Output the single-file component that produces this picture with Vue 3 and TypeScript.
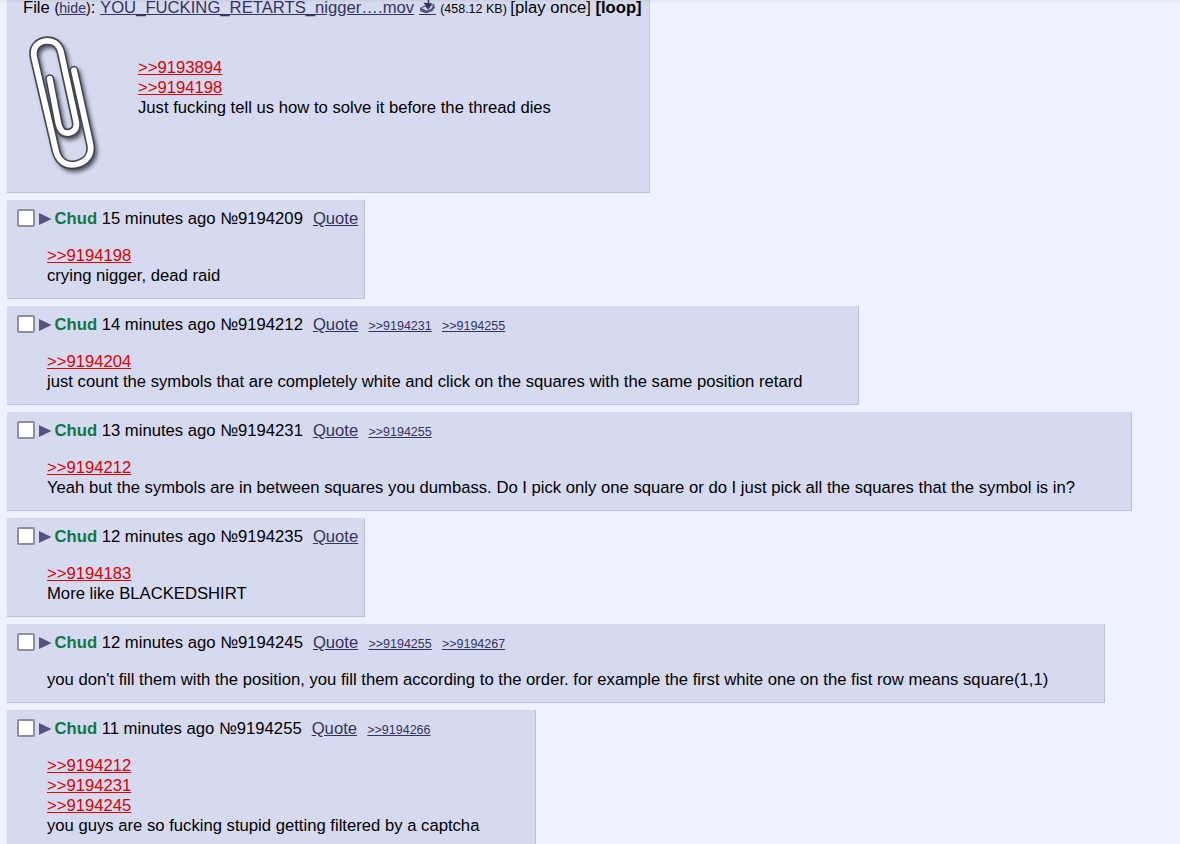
<script setup lang="ts">
interface Post {
  no: string
  ago: string
  width: number
  backlinks: string[]
  cites: string[]
  text: string
}

const posts: Post[] = [
  { no: '9194209', ago: '15 minutes ago', width: 358, backlinks: [], cites: ['9194198'], text: 'crying nigger, dead raid' },
  { no: '9194212', ago: '14 minutes ago', width: 852, backlinks: ['9194231', '9194255'], cites: ['9194204'], text: 'just count the symbols that are completely white and click on the squares with the same position retard' },
  { no: '9194231', ago: '13 minutes ago', width: 1125, backlinks: ['9194255'], cites: ['9194212'], text: 'Yeah but the symbols are in between squares you dumbass. Do I pick only one square or do I just pick all the squares that the symbol is in?' },
  { no: '9194235', ago: '12 minutes ago', width: 358, backlinks: [], cites: ['9194183'], text: 'More like BLACKEDSHIRT' },
  { no: '9194245', ago: '12 minutes ago', width: 1098, backlinks: ['9194255', '9194267'], cites: [], text: "you don't fill them with the position, you fill them according to the order. for example the first white one on the fist row means square(1,1)" },
  { no: '9194255', ago: '11 minutes ago', width: 529, backlinks: ['9194266'], cites: ['9194212', '9194231', '9194245'], text: 'you guys are so fucking stupid getting filtered by a captcha' },
]

const fileCites = ['9193894', '9194198']
const clip = 'M74 69.300L90.300 143C92.500 154 86 161 77 163.300C66 166 58.500 160 56 150L34.3 57C32 48 36.500 41.500 45 40C53 38.800 59 43 61 51L76 120C77.500 127 74.500 131 69 132C63 132.800 59.800 129 58.500 123L49.700 77.700'
</script>

<template>
  <div class="thread">
    <div class="post file-post">
      <div class="fileinfo">
        <span>File <small>(<a href="#">hide</a>)</small>: </span>
        <a class="filename" href="#">YOU_FUCKING_RETARTS_nigger….mov</a>
        <a class="download" href="#">
          <svg width="17" height="14" viewBox="0 0 17 14">
            <path d="M1 8L4.500 6L15 4L16 7.500L13.500 11L7 13.500L1 11Z" fill="#54567f" />
            <path d="M2.500 8L7 6.500L7.500 8L9 9.500L11.500 7L12 5.500L14 5.500L12.500 8.500L7.500 10.500Z" fill="#d6daf0" />
            <path d="M9.500 0V6M6 3.500L8.800 8L12 4Z" fill="#34345c" stroke="#34345c" stroke-width="1.5" />
          </svg>
        </a>
        <small class="size">(458.12 KB)</small>
        <span class="play">[play once]</span>
        <b>[loop]</b>
      </div>
      <div class="file-row">
        <svg class="clip" width="100" height="150" viewBox="20 30 100 150">
          <path class="shade" :d="clip" />
          <path class="edge" :d="clip" />
          <path class="wire" :d="clip" />
        </svg>
        <div class="file-body">
          <div v-for="c in fileCites" :key="c"><a class="cite" href="#">&gt;&gt;{{ c }}</a></div>
          <div>Just fucking tell us how to solve it before the thread dies</div>
        </div>
      </div>
    </div>

    <div v-for="p in posts" :key="p.no" class="post" :style="{ width: p.width + 'px' }">
      <div class="intro">
        <span class="box"></span>
        <svg class="arrow" width="13" height="12" viewBox="0 0 13 12"><path d="M0 0L12.500 6L0 12Z" /></svg>
        <span class="name">Chud</span>
        <span class="time">{{ p.ago }} №{{ p.no }}</span>
        <a class="quote" href="#">Quote</a>
        <a v-for="b in p.backlinks" :key="b" class="backlink" href="#">&gt;&gt;{{ b }}</a>
      </div>
      <div class="body">
        <div v-for="c in p.cites" :key="c"><a class="cite" href="#">&gt;&gt;{{ c }}</a></div>
        <div>{{ p.text }}</div>
      </div>
    </div>
  </div>
</template>

<style>
body {
  margin: 0;
  background: #eef2ff;
}
</style>

<style scoped>
.thread {
  height: 844px;
  overflow: hidden;
  box-sizing: border-box;
  padding-left: 7px;
  display: flex;
  flex-direction: column;
  align-items: flex-start;
  gap: 7px;
  background: linear-gradient(#e2e6f3, #eef2ff 3px);
  color: #000;
  font-family: "Liberation Sans", Arial, sans-serif;
  font-size: 16.67px;
  line-height: 20px;
  white-space: nowrap;
}
.post {
  box-sizing: border-box;
  flex-shrink: 0;
  padding: 9px 0 12px;
  background: #d6daf0;
  border-right: 1px solid #b7c5d9;
  border-bottom: 1px solid #b7c5d9;
}
a {
  color: #34345c;
}
.file-post {
  width: 643px;
  height: 193px;
  padding: 0;
  background: linear-gradient(#cbcfe2, #d6daf0 3px);
}
/* 16px line: the row sits flush with the top of the page */
.fileinfo {
  display: flex;
  align-items: baseline;
  height: 17px;
  line-height: 16px;
  padding-left: 16px;
  white-space: pre;
}
.fileinfo small {
  font-size: 14.2px;
}
.fileinfo .size {
  margin-right: 3.5px;
  font-size: 12.5px;
}
.play {
  margin-right: 4.5px;
}
.download {
  width: 17px;
  height: 14px;
  margin: 0 4px 0 5px;
  align-self: flex-start;
  border-bottom: 1px solid #34345c;
}
.download svg {
  display: block;
}
.file-row {
  display: flex;
  padding: 14px 0 0 13px;
}
.clip {
  margin-right: 18px;
}
.clip path {
  fill: none;
  stroke-linecap: round;
  stroke-linejoin: round;
}
.clip .shade {
  stroke: #4c4f60;
  stroke-width: 8px;
  transform: translate(2.5px, 3px);
  filter: blur(2px);
}
.clip .edge {
  stroke: #44464c;
  stroke-width: 9px;
}
.clip .wire {
  stroke: #fff;
  stroke-width: 5.8px;
}
.file-body {
  padding-top: 27px;
}
.intro {
  display: flex;
  align-items: baseline;
  height: 20px;
  padding-left: 10px;
}
.box {
  box-sizing: border-box;
  width: 18px;
  height: 18px;
  align-self: center;
  margin-top: -2px;
  border: 2px solid #8f8f9d;
  border-radius: 2px;
  background: #fff;
}
.arrow {
  align-self: center;
  margin: 0 2.5px 0 4px;
  fill: #54547f;
}
.name {
  margin-right: 4.6px;
  color: #117743;
  font-weight: bold;
}
.quote {
  margin-left: 10px;
}
.backlink {
  margin-left: 10.2px;
  font-size: 12.5px;
}
.body {
  padding: 17px 0 0 40px;
}
.cite {
  color: #d00;
}
</style>
